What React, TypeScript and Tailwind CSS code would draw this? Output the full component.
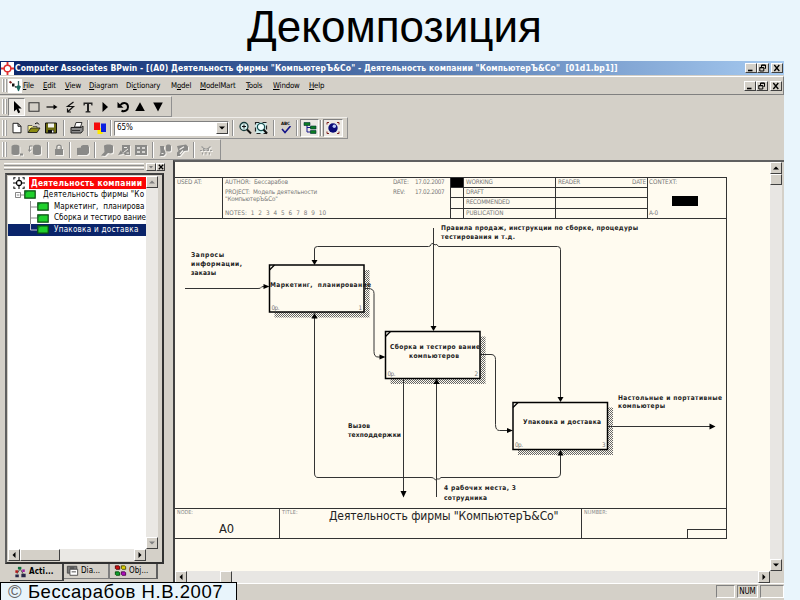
import React, { FC, ReactNode } from "react";
import clsx from "clsx";

const RAISED =
  "bg-[#d4d0c8] border border-t-white border-l-white border-b-[#404040] border-r-[#404040]";
const SUNKEN =
  "border border-t-[#808080] border-l-[#808080] border-b-white border-r-white";

const MENU = [
  { title: "File", width: "w-[20px]" },
  { title: "Edit", width: "w-[22px]" },
  { title: "View", width: "w-[24px]" },
  { title: "Diagram", width: "w-[37px]" },
  { title: "Dictionary", width: "w-[45px]", hot: 2 },
  { title: "Model", width: "w-[29px]", hot: 1 },
  { title: "ModelMart", width: "w-[46px]" },
  { title: "Tools", width: "w-[27px]" },
  { title: "Window", width: "w-[36px]" },
  { title: "Help", width: "w-[20px]" },
];

const TREE = [
  { title: "Маркетинг,  планирова", tracking: "tracking-[0.08px]" },
  { title: "Сборка и тестиро вание", tracking: "tracking-[0.02px]" },
  { title: "Упаковка и доставка", selected: true, tracking: "tracking-[0.27px]" },
];

interface BoxProps {
  className?: string;
  children?: ReactNode;
}

const Icon: FC<BoxProps> = ({ className, children }) => (
  <svg viewBox="0 0 14 14" className={clsx("h-[14px] w-[14px] shrink-0", className)}>
    {children}
  </svg>
);

// greyed out icon with the white edge at its lower right
const DimIcon: FC<BoxProps> = ({ children }) => (
  <Icon className="drop-shadow-[1px_1px_0_#f4f2ee]">{children}</Icon>
);

const Slot: FC<BoxProps> = ({ className, children }) => (
  <div className={clsx("flex h-full shrink-0 items-center justify-center", className)}>
    {children}
  </div>
);

const Sep: FC<BoxProps> = ({ className }) => (
  <Slot className={className}>
    <div className="h-[16px] w-[2px] border-l border-r border-l-[#909090] border-r-white" />
  </Slot>
);

const Grip = () => (
  <div className="flex h-full w-[8px] shrink-0 gap-px py-[2px] pl-[2px]">
    <div className="w-[2px] border-l border-r border-l-white border-r-[#a0a0a0]" />
    <div className="w-[2px] border-l border-r border-l-white border-r-[#a0a0a0]" />
  </div>
);

const Toolbar: FC<BoxProps> = ({ className, children }) => (
  <div
    className={clsx(
      "flex shrink-0 items-center border-t border-r border-b border-t-[#f0eeea] border-r-[#909090] border-b-[#909090]",
      className
    )}
  >
    <Grip />
    {children}
  </div>
);

const ScrollButton: FC<{ dir: "up" | "down" | "left" | "right"; dim?: boolean }> = ({ dir, dim }) => {
  const points = {
    up: "2,6.5 8,6.5 5,3.5",
    down: "2,3.5 8,3.5 5,6.5",
    left: "6.5,2 6.5,8 3.5,5",
    right: "3.5,2 3.5,8 6.5,5",
  };
  return (
    <div className={clsx("flex h-[12px] w-[12px] shrink-0 items-center justify-center", RAISED)}>
      <svg viewBox="0 0 10 10" className="h-[10px] w-[10px]">
        <polygon points={points[dir]} fill={dim ? "#808080" : "#000"} />
      </svg>
    </div>
  );
};

const WindowButtons = () => (
  <div className="flex shrink-0">
    <div className={clsx("h-[10px] w-[12px]", RAISED)}>
      <svg viewBox="0 0 10 8" className="h-[8px] w-[10px]">
        <path d="M2 6.5h4.5" stroke="#000" strokeWidth="1.6" />
      </svg>
    </div>
    <div className={clsx("h-[10px] w-[12px]", RAISED)}>
      <svg viewBox="0 0 10 8" className="h-[8px] w-[10px]" fill="none" stroke="#000">
        <path d="M3.5 3V1h4v3.5H6.5M3.5 1.3h4" />
        <path d="M1.8 3.5h4v3.5h-4zM1.8 3.8h4" />
      </svg>
    </div>
    <div className={clsx("ml-[2px] h-[10px] w-[12px]", RAISED)}>
      <svg viewBox="0 0 10 8" className="h-[8px] w-[10px]">
        <path d="M2.3 1l5 6M7.3 1l-5 6" stroke="#000" strokeWidth="1.3" />
      </svg>
    </div>
  </div>
);

const TitleBar = () => (
  <div className="flex h-[14px] shrink-0 items-center bg-linear-to-r from-[#0a246a] to-[#a6caf0] pr-px">
    <Icon className="ml-px mr-[1px] !h-[13px] !w-[13px] bg-white">
      <circle cx="7" cy="7" r="3.6" fill="none" stroke="#e03030" strokeWidth="1.6" />
      <path d="M7 0v4M7 10v4M0 7h4M10 7h4" stroke="#e03030" strokeWidth="2" />
    </Icon>
    <span className="flex-1 whitespace-pre text-[8.5px] leading-[13px] font-bold tracking-[0.085px] text-white">
      Computer Associates BPwin - [(A0) Деятельность фирмы "КомпьютерЪ&Co" - Деятельность компании "КомпьютерЪ&Co"  [01d1.bp1]]
    </span>
    <WindowButtons />
  </div>
);

const MenuBar = () => (
  <div className="mt-[1px] flex h-[19px] shrink-0 items-center border border-l-0 border-t-white border-r-[#808080] border-b-[#808080] pr-px">
    <Grip />
    <Icon className="bg-white">
      <path d="M1.5 2.5l2 1.5" stroke="#802020" strokeWidth="2" />
      <path d="M4 4.5h2.500v3H4z" fill="#111" />
      <path d="M7 7.500l1.500 1" stroke="#222" strokeWidth="1.500" />
      <path d="M10.500 2v10" stroke="#306060" strokeWidth="1.300" />
      <path d="M8 7.500l2.500-1.500L13 7.500l-2.500 5z" fill="#1a6a60" />
    </Icon>
    <div className="ml-[1px] flex flex-1 text-[7.8px] leading-[12px] tracking-[-0.17px] text-black">
      {MENU.map(({ title, width, hot = 0 }) => (
        <span key={title} className={clsx("shrink-0 whitespace-nowrap", width)}>
          {title.slice(0, hot)}
          <u className="underline-offset-1">{title[hot]}</u>
          {title.slice(hot + 1)}
        </span>
      ))}
    </div>
    <WindowButtons />
  </div>
);

const DrawToolbar = () => (
  <Toolbar className="h-[21px] w-[172px]">
    <Slot className={clsx("my-px w-[17px] !h-[18px] bg-[#ece9e4]", SUNKEN)}>
      <Icon>
        <path d="M4 1v10.5l2.5-2.3 1.7 4 2-1-1.8-3.7h3.3z" fill="#000" />
      </Icon>
    </Slot>
    <Slot className="w-[18px]">
      <Icon>
        <path d="M2 2.8h10v8.4H2z" fill="none" stroke="#333" strokeWidth="1.100" />
      </Icon>
    </Slot>
    <Slot className="w-[18px]">
      <Icon>
        <path d="M1.500 7h8" stroke="#000" strokeWidth="1.200" />
        <path d="M8.500 4.500l4 2.500-4 2.500z" fill="#000" />
      </Icon>
    </Slot>
    <Slot className="w-[18px]">
      <Icon>
        <path d="M10.500 2L4.500 6.500h6L5 11.500M4.500 8.500v3.500h3.500" fill="none" stroke="#111" strokeWidth="1.200" />
      </Icon>
    </Slot>
    <Slot className="w-[17px]">
      <Icon>
        <path d="M2.500 2.500h9v3h-1L10 4H8v7l1.500.5v1h-5v-1L6 11V4H4l-.5 1.500h-1z" fill="#222" />
      </Icon>
    </Slot>
    <Slot className="w-[18px]">
      <Icon>
        <path d="M4.500 2l5.500 5-5.500 5z" fill="#000" />
      </Icon>
    </Slot>
    <Slot className="w-[17px]">
      <Icon>
        <path d="M4.500 5C7 1.800 12 2.500 12 7c0 3.500-3.500 5-6.500 3.800" fill="none" stroke="#000" strokeWidth="2" />
        <path d="M1.500 2v5.800h6z" fill="#000" />
      </Icon>
    </Slot>
    <Slot className="w-[18px]">
      <Icon>
        <path d="M7 2.200l4.800 8.800H2.200z" fill="#000" />
      </Icon>
    </Slot>
    <Slot className="w-[18px]">
      <Icon>
        <path d="M7 11.500l4.800-9H2.200z" fill="#000" />
      </Icon>
    </Slot>
  </Toolbar>
);

const MainToolbar = () => (
  <Toolbar className="h-[22px] w-[348px]">
    <Slot className="w-[17px]">
      <Icon>
        <path d="M3 2.300h5l3 3v6.500H3zM8 2.300v3h3" fill="#fff" stroke="#222" />
      </Icon>
    </Slot>
    <Slot className="w-[18px]">
      <Icon>
        <path d="M1 4.500h4l1 1h4v6H1z" fill="#f7f08a" stroke="#444" strokeWidth=".8" />
        <path d="M1 11.500l3-4.500h9l-3 4.500z" fill="#8a8a10" stroke="#222" strokeWidth=".9" />
        <path d="M8 3c1.500-1.500 3-1.500 4 .5" fill="none" stroke="#000" />
      </Icon>
    </Slot>
    <Slot className="w-[16px]">
      <Icon>
        <path d="M1.500 2h11v10h-11z" fill="#6b6b10" stroke="#111" />
        <path d="M4 2.500h6v4H4z" fill="#f2f2ee" />
        <path d="M4 9h6v3H4z" fill="#111" />
        <path d="M8 9.500h1.500v2H8z" fill="#fff" />
      </Icon>
    </Slot>
    <Sep className="w-[10px]" />
    <Slot className="w-[15px]">
      <Icon>
        <path d="M4.500 6l1.500-4.500h6L10.500 6z" fill="#fff" stroke="#333" />
        <path d="M1 6.500h10l2-1.500v4.500l-2 2.500H1z" fill="#8b8b8b" stroke="#222" />
        <path d="M2 9.500h8" stroke="#333" />
      </Icon>
    </Slot>
    <Sep className="w-[8px]" />
    <Slot className="w-[16px]">
      <Icon>
        <path d="M4.500 7h5v6h-5z" fill="#ffe800" />
        <path d="M1 1.500h6v7.500H1z" fill="#f50a0a" />
        <path d="M8 2.500h5v8.500H8z" fill="#0a20e0" />
      </Icon>
    </Slot>
    <Sep className="w-[5px]" />
    <div
      className={clsx(
        "ml-px flex h-[15px] w-[115px] shrink-0 items-center justify-between bg-white pl-[2px]",
        SUNKEN
      )}
    >
      <span className="text-[8px] leading-[12px] tracking-[-0.1px]">65%</span>
      <ScrollButton dir="down" />
    </div>
    <Sep className="w-[8px]" />
    <Slot className="w-[15px]">
      <Icon>
        <circle cx="6" cy="5.500" r="4" fill="#d8f0ee" stroke="#173c3c" strokeWidth="1.300" />
        <path d="M4 5.500h4M6 3.500v4" stroke="#111" />
        <path d="M9 8.500l4 4" stroke="#111" strokeWidth="2" />
      </Icon>
    </Slot>
    <Slot className="w-[18px]">
      <Icon>
        <path d="M1.500 1.500h11v11h-11z" fill="#cfeeee" stroke="#222" strokeWidth="1.200" strokeDasharray="4 3" />
        <circle cx="7" cy="6" r="3.600" fill="#f0ffff" stroke="#175050" strokeWidth="1.200" />
        <path d="M9.500 8.500l3.500 4" stroke="#111" strokeWidth="2" />
      </Icon>
    </Slot>
    <Sep className="w-[8px]" />
    <Slot className="w-[15px]">
      <div className="flex flex-col items-center">
        <span className="text-[4.500px] leading-[4px] font-bold tracking-[-0.1px]">ABC</span>
        <svg viewBox="0 0 12 8" className="h-[8px] w-[12px]">
          <path d="M2 3l3 3.500L10.500 0" fill="none" stroke="#15158a" strokeWidth="1.600" />
        </svg>
      </div>
    </Slot>
    <Sep className="w-[7px]" />
    <Slot className={clsx("w-[19px] !h-[18px] bg-[#ece9e4]", SUNKEN)}>
      <Icon>
        <path d="M4 4v7h4M4 6.500h4" fill="none" stroke="#15158a" />
        <path d="M1 1.500h6v3H1zM7.500 5h5.500v3H7.500zM7.500 9.500h5.500v3H7.500z" fill="#0b7a22" stroke="#033" strokeWidth=".6" />
      </Icon>
    </Slot>
    <Sep className="w-[4px]" />
    <Slot className={clsx("w-[20px] !h-[18px] bg-[#ece9e4]", SUNKEN)}>
      <Icon>
        <path d="M1 3.500V1.500h2M11 1.500h2v2M1 10.500v2h2M11 12.500h2v-2" fill="none" stroke="#802020" />
        <circle cx="7" cy="7" r="4.700" fill="#0a0a78" />
        <circle cx="8.300" cy="5.300" r="1.700" fill="#b9c8f4" />
      </Icon>
    </Slot>
  </Toolbar>
);

// everything on this bar is disabled
const ModelMartToolbar = () => (
  <Toolbar className="h-[21px] w-[221px]">
    <Slot className="w-[18px]">
      <DimIcon>
        <path d="M1.500 3.500c0-2.500 8-2.500 8 0v7c0 2-8 2-8 0zM10 10.500h3v2h-3z" fill="#8a8a88" />
      </DimIcon>
    </Slot>
    <Slot className="w-[18px]">
      <DimIcon>
        <path d="M5 3.500c0-2.500 8-2.500 8 0v7c0 2-8 2-8 0z" fill="#8a8a88" />
        <path d="M4.500 3H1.500v5M.3 6.500l1.200 2 1.500-2" fill="none" stroke="#8a8a88" />
      </DimIcon>
    </Slot>
    <Sep className="w-[7px]" />
    <Slot className="w-[15px]">
      <DimIcon>
        <path d="M3 6h8v6H3z" fill="#8a8a88" />
        <path d="M4.800 6V4c0-2.500 4.400-2.500 4.400 0v2" fill="none" stroke="#8a8a88" strokeWidth="1.300" />
      </DimIcon>
    </Slot>
    <Sep className="w-[8px]" />
    <Slot className="w-[17px]">
      <DimIcon>
        <path d="M1 5l4-.5V3l2-1h5l1 2v6l-2 2H1z" fill="#8a8a88" />
      </DimIcon>
    </Slot>
    <Sep className="w-[7px]" />
    <Slot className="w-[17px]">
      <DimIcon>
        <path d="M4 3c0-2 9-2 9 0v6c0 1-2 2-5 1l-3 3-4-.5 3.500-3.500z" fill="#8a8a88" />
      </DimIcon>
    </Slot>
    <Slot className="w-[17px]">
      <DimIcon>
        <path d="M5 2h8v10H8l-3-3zM1 12l3-5 2 4z" fill="#8a8a88" />
        <path d="M7 4.500h3M6.500 9.500l4.500-3.500M9.500 10h2.500" stroke="#f0eeea" />
      </DimIcon>
    </Slot>
    <Slot className="w-[17px]">
      <DimIcon>
        <path d="M1 2h12v10H1z" fill="#8a8a88" />
        <path d="M3 5h3M8 5h3M3 9h3M8 9h3" stroke="#f0eeea" strokeWidth="1.400" />
      </DimIcon>
    </Slot>
    <Sep className="w-[8px]" />
    <Slot className="w-[16px]">
      <DimIcon>
        <path d="M2 3h4v3l1.500 3v2l-2 2H1.500l1-4z" fill="#8a8a88" />
        <path d="M8 3c0-2 5-2 5 0v4c0 2-5 2-5 0z" fill="#8a8a88" />
        <path d="M3.500 10.500h2" stroke="#f0eeea" />
      </DimIcon>
    </Slot>
    <Slot className="w-[17px]">
      <DimIcon>
        <path d="M2 3l9-1.500 2 2v4l-4 .5-4 5H2V9.500L3.500 8z" fill="#8a8a88" />
        <path d="M4.500 6.500L9 3.800M5 11l3-3.500" stroke="#f4f2ee" strokeWidth="1.200" />
      </DimIcon>
    </Slot>
    <Sep className="w-[8px]" />
    <Slot className="w-[16px]">
      <DimIcon>
        <path d="M2.500 3.500l2 1.500M11.500 3.500l-2 1.500M4.500 5.500h1.500v2H4.500zM8 5.500h1.500v2H8zM1 7.500h2M11 7.500h2M3.500 9.500v2M7 9v2.500M10.500 9.500v2" fill="none" stroke="#9a9a98" strokeWidth="1.100" />
      </DimIcon>
    </Slot>
  </Toolbar>
);

const ActivityBox = () => (
  <svg viewBox="0 0 12 9" className="h-[9px] w-[12px] shrink-0">
    <path d="M.8.800h10.400v7.400H.8z" fill="#1fd02c" stroke="#0a4a10" strokeWidth="1.200" />
    <path d="M1 3.500L3.500 1" stroke="#063" strokeWidth=".8" />
  </svg>
);

const Explorer = () => (
  <div className="flex w-[170px] shrink-0 flex-col">
    <div className="flex h-[13px] shrink-0 items-center pl-[4px]">
      <div className="flex w-[140px] flex-col gap-px">
        <div className="h-[3px] border-t border-b border-t-white border-b-[#909090]" />
        <div className="h-[3px] border-t border-b border-t-white border-b-[#909090]" />
      </div>
      <div className={clsx("ml-[2px] flex h-[8px] w-[10px] items-center justify-center", RAISED)}>
        <svg viewBox="0 0 6 4" className="h-[4px] w-[6px]">
          <path d="M1 1h4L3 3.500z" fill="#777" />
        </svg>
      </div>
      <div className={clsx("flex h-[8px] w-[9px] items-center justify-center", RAISED)}>
        <svg viewBox="0 0 6 6" className="h-[6px] w-[6px]">
          <path d="M.8.800l4.400 4.400M5.200.800L.8 5.200" stroke="#000" strokeWidth="1.300" />
        </svg>
      </div>
    </div>

    <div className="ml-[5px] flex h-[391px] w-[159px] shrink-0 border-2 border-t-[#404040] border-l-[#606060] border-b-[#303030] border-r-[#303030] bg-[#d4d0c8] p-px">
      <div className="flex w-[138px] flex-col">
        <div className="flex-1 overflow-hidden bg-white pt-px text-[8px] leading-[11.700px] text-black">
          <div className="flex h-[12px] items-center">
            <Icon className="ml-[5px] mr-[4px] !h-[12px] !w-[12px]">
              <circle cx="7" cy="7" r="3" fill="none" stroke="#000" strokeWidth="1.300" />
              <path d="M7 0v5M7 9v5M0 7h5M9 7h5" stroke="#000" strokeWidth="1.200" />
              <path d="M1 3V1h2M11 1h2v2M1 11v2h2M11 13h2v-2" fill="none" stroke="#000" strokeWidth="1.200" />
            </Icon>
            <div className="h-full flex-1 bg-[#fa0505] pl-[2px] text-[8.400px] leading-[12px] font-bold tracking-[0.27px] whitespace-pre text-white">
              Деятельность компании
            </div>
          </div>
          <div className="flex h-[11.700px] items-center">
            <svg viewBox="0 0 10 10" className="ml-[6px] h-[10px] w-[10px] shrink-0">
              <path d="M1.500 2.500h5v5h-5zM2.800 5h2.500M6.500 5H10" fill="none" stroke="#777" strokeWidth=".9" />
            </svg>
            <ActivityBox />
            <span className="ml-[7px] tracking-[0.18px] whitespace-pre">Деятельность фирмы "Ко</span>
          </div>
          {TREE.map(({ title, selected, tracking }, idx) => (
            <div
              key={title}
              className={clsx("flex h-[11.700px] items-center", selected && "bg-[#0a246a] text-white")}
            >
              <svg viewBox="0 0 8 12" className="ml-[21px] h-[12px] w-[8px] shrink-0">
                <path
                  d={idx === TREE.length - 1 ? "M1.500 0v6H8" : "M1.500 0v12M1.500 6H8"}
                  fill="none"
                  stroke={selected ? "#c8c8d8" : "#888"}
                />
              </svg>
              <ActivityBox />
              <span className={clsx("ml-[5px] whitespace-pre", tracking)}>{title}</span>
            </div>
          ))}
        </div>
        <div className="flex h-[12px] shrink-0 bg-[#eae8e4]">
          <ScrollButton dir="left" />
          <div className={clsx("h-full w-[40px]", RAISED)} />
          <div className="flex-1" />
          <ScrollButton dir="right" />
        </div>
      </div>
      <div className="flex w-[12px] flex-col justify-between bg-[#eae8e4]">
        <ScrollButton dir="up" dim />
        <div className="flex flex-col">
          <ScrollButton dir="down" dim />
          <div className="h-[12px] bg-[#d4d0c8]" />
        </div>
      </div>
      <div className="flex-1" />
    </div>

    <div className="ml-[10px] flex h-[18px] text-[8px] leading-[14px] text-black">
      <div className="flex h-[17px] w-[54px] items-center border-r-2 border-b border-[#404040] bg-[#d4d0c8] pl-[4px] font-bold">
        <Icon className="mr-[2px] !h-[12px] !w-[13px]">
          <path d="M6 4L3 9M7 4l3 5" stroke="#333" />
          <path d="M4 1h4v3H4z" fill="#107040" />
          <path d="M1 5h3v3H1z" fill="#b01818" />
          <path d="M1 10h4v3H1zM8 9h5v4H8z" fill="#282848" />
          <path d="M9 4h3v3H9z" fill="#a020a0" />
        </Icon>
        <span className="tracking-[0.1px]">Acti...</span>
      </div>
      <div className="flex h-[15px] w-[46px] items-center border-r-2 border-b border-[#808080] pl-[2px]">
        <Icon className="mr-[2px] !h-[12px] !w-[13px]">
          <path d="M1 1.500h11v8H1z" fill="#777" stroke="#444" />
          <path d="M4 5h9v7H4z" fill="#fff" stroke="#444" />
          <path d="M4 3.500h5M6 8h5" stroke="#333" />
        </Icon>
        <span className="tracking-[0.05px]">Dia...</span>
      </div>
      <div className="flex h-[15px] w-[48px] items-center border-r-2 border-b border-[#606060] pl-[4px]">
        <Icon className="mr-[2px] !h-[12px] !w-[13px]">
          <path d="M1 1h4l1 1v3H2L1 4z" fill="#d01010" stroke="#400" />
          <path d="M8 1h4l1 1v3H9L8 4z" fill="#e0d000" stroke="#440" />
          <path d="M1 8h4l1 1v3H2l-1-1z" fill="#10a030" stroke="#040" />
          <path d="M8 8h4l1 1v3H9l-1-1z" fill="#b010c0" stroke="#404" />
        </Icon>
        <span className="tracking-[0.05px]">Obj...</span>
      </div>
    </div>
  </div>
);

const SheetHeader = () => (
  <div className="flex h-[42px] shrink-0 border border-l-0 border-[#333] text-[6.300px] leading-[8px] tracking-[-0.2px] whitespace-pre text-[#777]">
    <div className="w-[48px] border-r border-[#333] pl-[2px] tracking-[-0.08px]">USED AT:</div>
    <div className="flex w-[227px] flex-col pl-[2px]">
      <div className="flex h-[10px]">
        <span className="w-[168px] tracking-[-0.05px]">AUTHOR:  Бессарабов</span>
        <span className="w-[22px]">DATE:</span>
        <span className="tracking-[-0.3px]">17.02.2007</span>
      </div>
      <div className="flex h-[7px]">
        <span className="w-[168px] tracking-[-0.12px]">PROJECT:  Модель деятельности</span>
        <span className="w-[22px]">REV:</span>
        <span className="tracking-[-0.3px]">17.02.2007</span>
      </div>
      <div className="h-[14px]">"КомпьютерЪ&Co"</div>
      <div className="tracking-[0.120px]">NOTES:  1  2  3  4  5  6  7  8  9  10</div>
    </div>
    <div className="grid w-[197px] grid-cols-[12px_93px_92px] grid-rows-[10px_10px_11px_9px] border-l border-[#333]">
      <div className="border-b border-[#333] bg-black" />
      <div className="border-r border-b border-l border-[#333] pl-[2px]">WORKING</div>
      <div className="flex justify-between border-b border-[#333] px-[2px]">
        <span>READER</span>
        <span>DATE</span>
      </div>
      <div className="border-b border-[#333]" />
      <div className="border-r border-b border-l border-[#333] pl-[2px]">DRAFT</div>
      <div className="border-b border-[#333]" />
      <div className="border-b border-[#333]" />
      <div className="border-r border-b border-l border-[#333] pl-[2px]">RECOMMENDED</div>
      <div className="border-b border-[#333]" />
      <div />
      <div className="border-r border-l border-[#333] pl-[2px] tracking-normal">PUBLICATION</div>
      <div />
    </div>
    <div className="flex flex-1 flex-col border-l border-[#333] pl-px">
      <div className="h-[18px] tracking-normal">CONTEXT:</div>
      <div className="ml-[23px] h-[10px] w-[26px] bg-black" />
      <div className="mt-[3px]">A-0</div>
    </div>
  </div>
);

interface ActivityProps {
  x: number;
  y: number;
  no: number;
}

const Activity: FC<ActivityProps> = ({ x, y, no }) => (
  <g>
    <rect x={x + 5} y={y + 5} width="95" height="47.500" fill="url(#hatch)" />
    <rect x={x} y={y} width="94.500" height="47" fill="#fffbf0" stroke="#000" strokeWidth="1.500" />
    <path d={`M${x} ${y + 5}l5-5`} stroke="#000" strokeWidth="1.300" />
    <g fontSize="6.300" fill="#777">
      <text x={x + 2} y={y + 44.500} textLength="8">0р.</text>
      <text x={x + 89} y={y + 44.500}>{no}</text>
    </g>
  </g>
);

interface CaptionProps {
  x: number;
  y: number;
  w: number;
  children: string;
}

const Caption: FC<CaptionProps> = ({ x, y, w, children }) => (
  <text x={x} y={y} textLength={w} className="whitespace-pre">
    {children}
  </text>
);

// user units are window pixels, the sheet body starts at 175,219
const Diagram = () => (
  <svg viewBox="175 219 551 289" className="h-[289px] w-[551px] shrink-0 font-['DejaVu_Sans_Condensed','DejaVu_Sans',sans-serif]">
    <defs>
      <pattern id="hatch" width="2" height="2" patternUnits="userSpaceOnUse">
        <path d="M0 0h1v1H0zM1 1h1v1H1z" fill="#666" />
      </pattern>
    </defs>
    <Activity x={269.500} y={265} no={1} />
    <Activity x={385.500} y={331.500} no={2} />
    <Activity x={513} y={402.500} no={3} />
    <g fill="none" stroke="#333">
      <path d="M185 288.500h73q3 0 3-1t3-1h2" />
      <path d="M314.500 260v-11q0-2.500 3-2.500h111q2 0 2.500-2t2.500-.5 2.500.5 2.500 2h119q3 0 3 3v148" />
      <path d="M433.500 228v100" />
      <path d="M364 288.500h4q6 0 6 5v58q0 5.500 4 5.500h3" />
      <path d="M481 354.500h10q4.500 0 4.500 5v65q0 6 4 6h8" />
      <path d="M403.500 379v114" />
      <path d="M436.500 497V383" />
      <path d="M314.500 317v156q0 4.500 3.500 4.500h113q3 0 3.500 1.500t2 .5 2-.5 2.500-1.500h115q4.500 0 4.500-4.500v-20" />
      <path d="M608 426.500h103" />
    </g>
    <g fill="#000">
      <path d="M269.500 286.500l-6-2.500v5z" />
      <path d="M314.500 265l-3-5h6z" />
      <path d="M560.500 402l-3-5h6z" />
      <path d="M433.500 331l-3-5h6z" />
      <path d="M385.500 357l-6-2.500v5z" />
      <path d="M513 430.500l-6-2.500v5z" />
      <path d="M403.500 497.500l-3-6.500h6z" />
      <path d="M436.500 378.500l-3 5.500h6z" />
      <path d="M314.500 313l-3 5.500h6z" />
      <path d="M560.500 450l-3 5.500h6z" />
      <path d="M715.500 426.500l-6-3v6z" />
    </g>
    <g fontSize="6.600" fontWeight="bold" fill="#222">
      <Caption x={191} y={257} w={33}>Запросы</Caption>
      <Caption x={191} y={266} w={51}>информации,</Caption>
      <Caption x={191} y={275} w={25}>заказы</Caption>
      <Caption x={270} y={287} w={101}>Маркетинг,  планирование</Caption>
      <Caption x={441} y={230} w={197}>Правила продаж, инструкции по сборке, процедуры</Caption>
      <Caption x={441} y={239} w={74}>тестирования и т.д.</Caption>
      <Caption x={390} y={349} w={90}>Сборка и тестиро вание</Caption>
      <Caption x={409} y={358} w={50}>компьютеров</Caption>
      <Caption x={523} y={424} w={78}>Упаковка и доставка</Caption>
      <Caption x={348} y={428} w={22}>Вызов</Caption>
      <Caption x={348} y={437} w={53}>техподдержки</Caption>
      <Caption x={444} y={490} w={72}>4 рабочих места, 3</Caption>
      <Caption x={444} y={500} w={43}>сотрудника</Caption>
      <Caption x={618} y={400} w={104}>Настольные и портативные</Caption>
      <Caption x={618} y={408} w={47}>компьютеры</Caption>
    </g>
  </svg>
);

const SheetFooter = () => (
  <div className="flex h-[31px] shrink-0 border border-l-0 border-[#333] text-[5.400px] leading-[7px] whitespace-pre text-[#888]">
    <div className="w-[105px] border-r border-[#333] pl-[2px]">
      <div>NODE:</div>
      <div className="mt-[6px] ml-[42px] font-['DejaVu_Sans',sans-serif] text-[11.500px] leading-[14px] tracking-[-0.2px] text-[#222]">A0</div>
    </div>
    <div className="flex w-[301px] pl-[2px]">
      <span className="w-[47px] tracking-[0.2px]">TITLE:</span>
      <span className="text-[12px] leading-[15px] tracking-[-0.1px] text-[#222]">
        Деятельность фирмы "КомпьютерЪ&Co"
      </span>
    </div>
    <div className="flex flex-1 items-end justify-between border-l border-[#333] pl-[2px]">
      <span className="self-start tracking-[0.1px]">NUMBER:</span>
      <div className="h-[9px] w-[39px] border-t border-l border-[#333]" />
    </div>
  </div>
);

const Sheet = () => (
  <div className="ml-[3px] flex flex-1 flex-col border-t-2 border-l-2 border-t-[#606060] border-l-[#404040]">
    <div className="flex h-[409px]">
      <div className="flex w-[595px] flex-col bg-[#fffbf0] pt-[15px]">
        <div className="flex w-[552px] flex-col">
          <SheetHeader />
          <div className="flex border-r border-[#333]">
            <Diagram />
          </div>
          <SheetFooter />
        </div>
      </div>
      <div className="flex w-[12px] flex-col bg-[#e8e6e3]">
        <ScrollButton dir="up" />
        <div className={clsx("h-[11px] w-[12px]", RAISED)} />
        <div className="flex-1" />
        <ScrollButton dir="down" />
      </div>
    </div>
    <div className="flex h-[12px] w-[607px] bg-[#e8e6e3]">
      <ScrollButton dir="left" />
      <div className="ml-[33px]">
        <div className={clsx("h-[12px] w-[12px]", RAISED)} />
      </div>
      <div className="flex-1" />
      <ScrollButton dir="right" />
      <div className="w-[12px] bg-[#d4d0c8]" />
    </div>
  </div>
);

const StatusBar = () => (
  <div className="-mt-px flex h-[18px] shrink-0 items-start">
    <div className="flex h-[18px] w-[237px] items-center border border-b-0 border-black bg-[#e8f4fb] pl-[7px] font-['Liberation_Sans',Arial,sans-serif] text-[18.500px] leading-[17px] tracking-[0.55px] whitespace-pre text-black">
      <span className="text-[#666]">©</span> Бессарабов Н.В.2007
    </div>
    <div className="mt-px flex-1 border-t border-white" />
    <div className="mt-px flex h-[15px] gap-[2px] border-t border-white pt-px text-[8px] leading-[12px] text-black">
      <div className={clsx("w-[19px]", SUNKEN)} />
      <div className={clsx("w-[21px] text-center tracking-[-0.2px]", SUNKEN)}>NUM</div>
      <div className={clsx("w-[24px]", SUNKEN)} />
    </div>
  </div>
);

const App = () => {
  return (
    <div className="flex h-[600px] w-[800px] flex-col overflow-hidden bg-[#e9f5fc] font-['DejaVu_Sans_Condensed','DejaVu_Sans',sans-serif]">
      <h1 className="h-[61px] shrink-0 pr-[11px] text-center font-['Liberation_Sans',Arial,sans-serif] text-[44px] leading-[53px] font-normal text-black">
        Декомпозиция
      </h1>
      <div className="flex w-[784px] flex-1 flex-col bg-[#d4d0c8]">
        <TitleBar />
        <MenuBar />
        <div className="flex h-[65px] shrink-0 flex-col pt-px">
          <DrawToolbar />
          <MainToolbar />
          <ModelMartToolbar />
        </div>
        <div className="flex h-[423px] shrink-0">
          <Explorer />
          <Sheet />
        </div>
        <StatusBar />
      </div>
    </div>
  );
};

export default App;
